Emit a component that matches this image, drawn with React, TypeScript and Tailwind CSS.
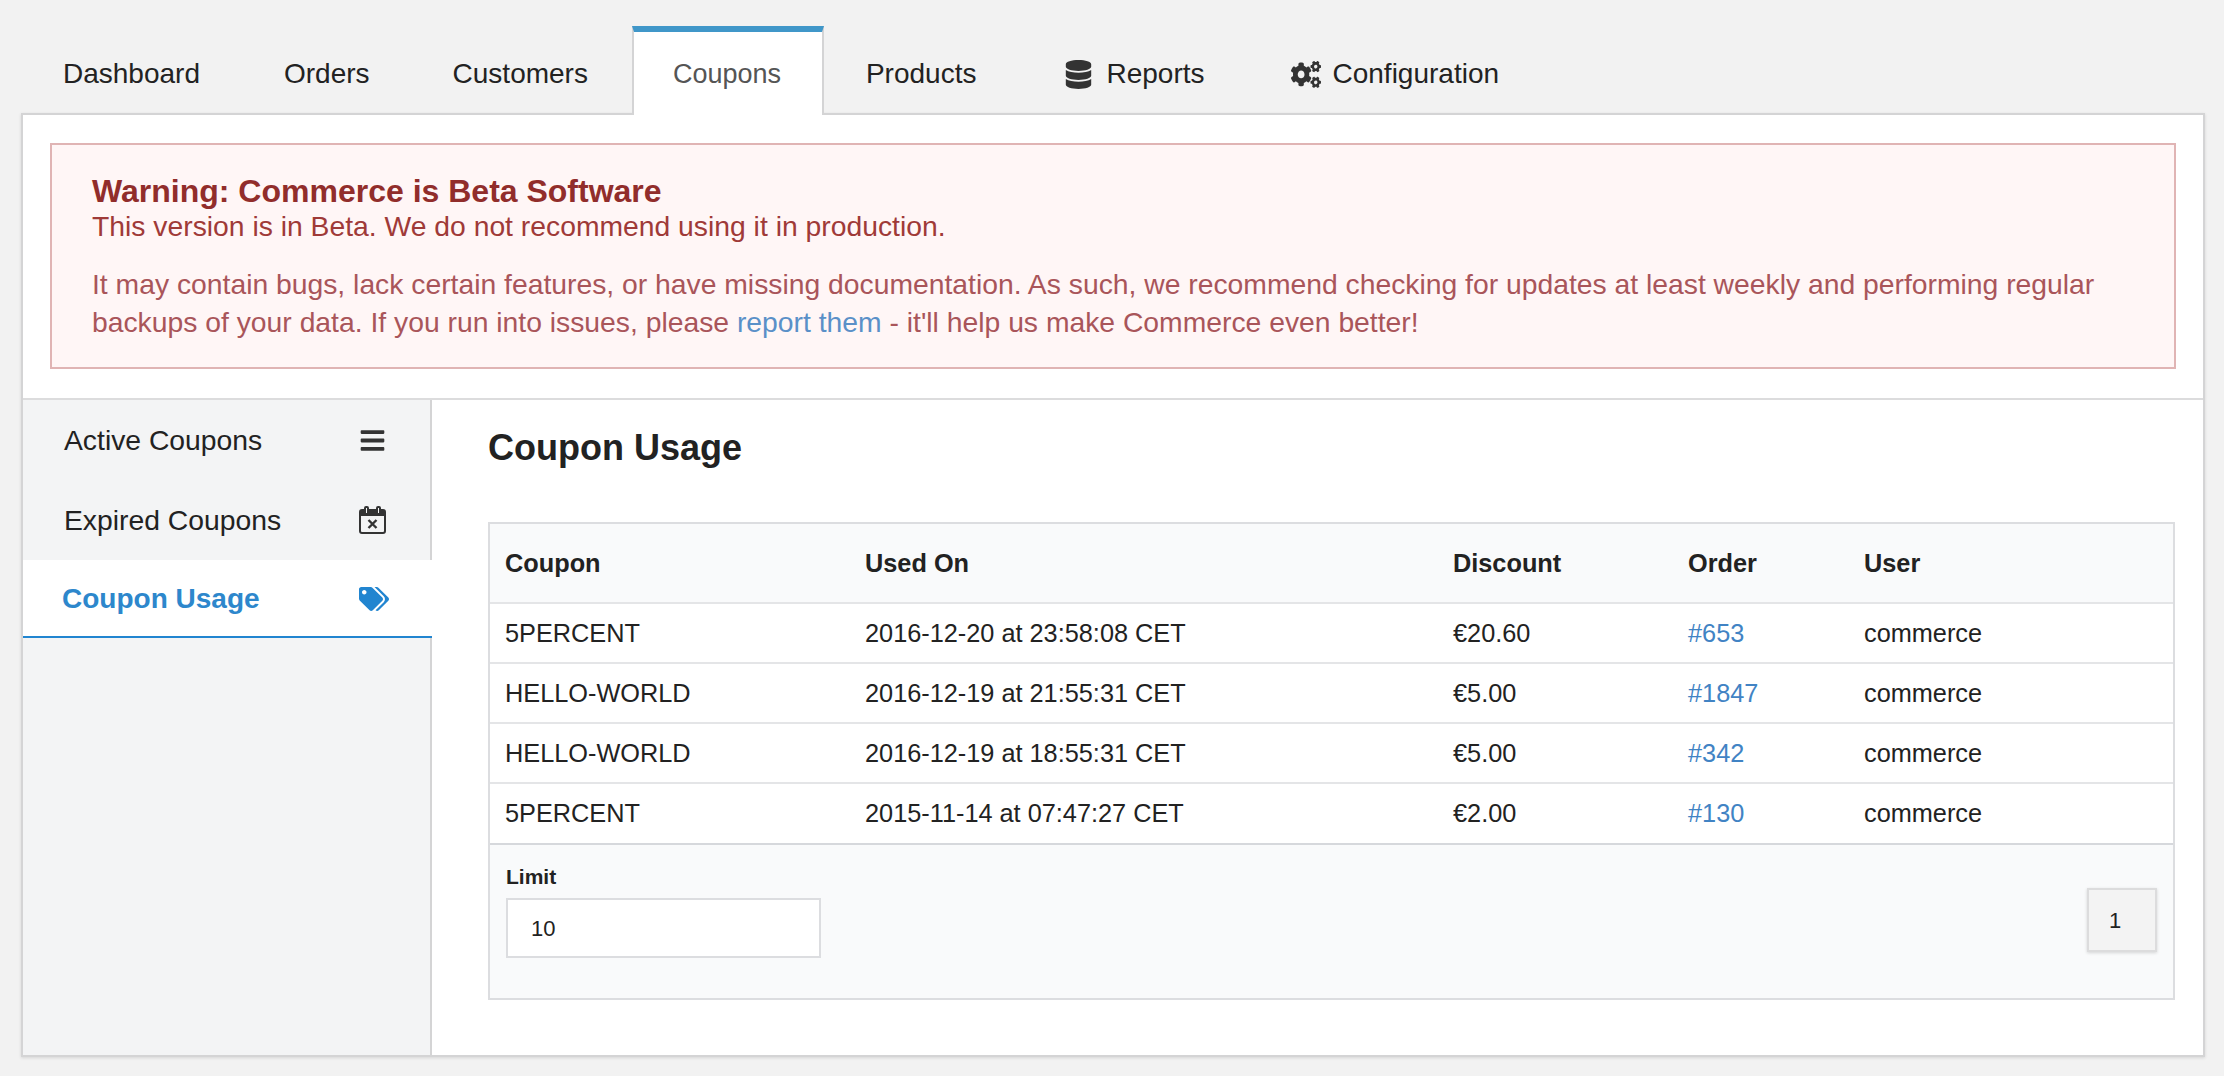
import { FaBars, FaCogs, FaDatabase, FaTags } from 'react-icons/fa';

const rows = [
  { coupon: '5PERCENT', usedOn: '2016-12-20 at 23:58:08 CET', discount: '€20.60', order: '#653' },
  { coupon: 'HELLO-WORLD', usedOn: '2016-12-19 at 21:55:31 CET', discount: '€5.00', order: '#1847' },
  { coupon: 'HELLO-WORLD', usedOn: '2016-12-19 at 18:55:31 CET', discount: '€5.00', order: '#342' },
  { coupon: '5PERCENT', usedOn: '2015-11-14 at 07:47:27 CET', discount: '€2.00', order: '#130' },
];

function Tab({ children, className = '' }: { children: React.ReactNode; className?: string }) {
  return (
    <a className={`flex items-center h-[89px] pt-[1px] border-t-[6px] border-transparent text-[28px] text-[#222] ${className}`}>
      {children}
    </a>
  );
}

// calendar with a cross, the outline style the sidebar uses
function CalendarX() {
  return (
    <svg width="27" height="28" viewBox="0 0 27 28" className="text-[#333]">
      <path
        fill="currentColor"
        fillRule="evenodd"
        d="M3 3h2V2a2 2 0 0 1 2-2h1a2 2 0 0 1 2 2v1h7V2a2 2 0 0 1 2-2h1a2 2 0 0 1 2 2v1h2a3 3 0 0 1 3 3v19a3 3 0 0 1-3 3H3a3 3 0 0 1-3-3V6a3 3 0 0 1 3-3zM7 2v5h1V2H7zm12 0v5h1V2h-1zM2 10v15a1 1 0 0 0 1 1h21a1 1 0 0 0 1-1V10H2z"
      />
      <path d="M9.5 14l8 8M17.5 14l-8 8" stroke="currentColor" strokeWidth="2.4" />
    </svg>
  );
}

export default function App() {
  return (
    <div className="min-h-[1076px] bg-[#f2f2f2] pt-[26px] pl-[21px] font-['Liberation_Sans',Arial,sans-serif]">
      <nav className="relative z-10 flex h-[89px] -mb-[2px]">
        <Tab className="pl-[42px] pr-[42px]">Dashboard</Tab>
        <Tab className="pl-[42px] pr-[41px]">Orders</Tab>
        <Tab className="pl-[42px] pr-[44px]">Customers</Tab>
        <a className="flex items-center h-[89px] w-[192px] pl-[39px] pt-[1px] border-x-2 border-x-[#d4d4d5] border-t-[6px] border-t-[#4097c9] bg-white text-[27px] text-[#555]">
          Coupons
        </a>
        <Tab className="pl-[42px] pr-[44px]">Products</Tab>
        <Tab className="pl-[44px] pr-[42px]">
          <FaDatabase className="mr-[13px] text-[29px] text-[#333]" />
          Reports
        </Tab>
        <Tab className="pl-[45px]">
          <FaCogs preserveAspectRatio="none" className="mr-[11px] w-[30px] h-[27px] text-[#333]" />
          Configuration
        </Tab>
      </nav>

      <div className="flex flex-col w-[2184px] h-[944px] bg-white border-2 border-[#d4d4d5] shadow-[0_1px_3px_rgba(0,0,0,0.12)]">
        <div className="px-[27px] pt-[28px] pb-[29px] border-b-2 border-[#dcdcdd]">
          <div className="h-[226px] pl-[40px] pr-[40px] pt-[28px] border-2 border-[#e0b4b4] bg-[#fff6f6]">
            <div className="text-[32px] leading-[36px] font-bold text-[#912d2b]">Warning: Commerce is Beta Software</div>
            <p className="text-[28.3px] leading-[35px] text-[#9f3a38]">This version is in Beta. We do not recommend using it in production.</p>
            <p className="mt-[21px] text-[28.3px] leading-[38px] text-[#a9555a]">
              It may contain bugs, lack certain features, or have missing documentation. As such, we recommend checking for updates at least weekly and performing regular backups of your data. If you run into issues, please{' '}
              <a className="text-[#5a90c8]">report them</a> - it'll help us make Commerce even better!
            </p>
          </div>
        </div>

        <div className="flex flex-1 min-h-0">
          <aside className="w-[409px] shrink-0 bg-[#f3f4f5] border-r-2 border-[#d4d4d5]">
            <a className="flex items-center justify-between h-[80px] pl-[41px] pr-[44px] text-[28.3px] text-[#222]">
              Active Coupons
              <FaBars className="text-[27px] text-[#333]" />
            </a>
            <a className="flex items-center justify-between h-[80px] pl-[41px] pr-[44px] text-[28.3px] text-[#222]">
              Expired Coupons
              <CalendarX />
            </a>
            <a className="flex items-center justify-between h-[78px] w-[409px] pl-[39px] pr-[43px] pt-[1px] bg-white border-b-2 border-[#2185d0] text-[28px] font-bold text-[#2d87cc]">
              Coupon Usage
              <FaTags className="text-[30px] text-[#2185d0]" />
            </a>
          </aside>

          <main className="flex-1 pl-[56px] pr-[28px]">
            <h1 className="mt-[28px] text-[36px] leading-[40px] font-bold text-[#222]">Coupon Usage</h1>
            <div className="mt-[54px] border-2 border-[#dcdde0] bg-[#f9fafb] text-[25.3px] text-[#222]">
              <table className="w-full table-fixed border-collapse">
                <colgroup>
                  <col className="w-[375px]" />
                  <col className="w-[588px]" />
                  <col className="w-[235px]" />
                  <col className="w-[176px]" />
                  <col />
                </colgroup>
                <thead>
                  <tr className="h-[79px]">
                    <th className="pl-[15px] pt-[2px] text-left font-bold">Coupon</th>
                    <th className="pt-[2px] text-left font-bold">Used On</th>
                    <th className="pt-[2px] text-left font-bold">Discount</th>
                    <th className="pt-[2px] text-left font-bold">Order</th>
                    <th className="pt-[2px] text-left font-bold">User</th>
                  </tr>
                </thead>
                <tbody className="bg-white">
                  {rows.map((row, i) => (
                    <tr key={i} className="h-[60px] border-t-2 border-[#e4e5e7]">
                      <td className="pl-[15px] pt-[1px]">{row.coupon}</td>
                      <td className="pt-[1px]">{row.usedOn}</td>
                      <td className="pt-[1px]">{row.discount}</td>
                      <td className="pt-[1px] text-[#4183c4]">{row.order}</td>
                      <td className="pt-[1px]">commerce</td>
                    </tr>
                  ))}
                </tbody>
              </table>
              <div className="flex items-start justify-between h-[155px] pl-[16px] pr-[16px] border-t-2 border-[#d6d8dc]">
                <div className="pt-[19px]">
                  <label className="block text-[21px] leading-[26px] font-bold text-[#222]">Limit</label>
                  <input
                    readOnly
                    value="10"
                    className="block mt-[8px] w-[315px] h-[60px] pl-[23px] pt-[2px] bg-white border-2 border-[#dcdde0] text-[22px] text-[#222]"
                  />
                </div>
                <button className="mt-[43px] w-[70px] h-[64px] pl-[20px] text-left bg-[#f3f3f3] border-2 border-[#dcdcdd] shadow-[0_1px_3px_rgba(0,0,0,0.15)] text-[22px] text-[#222]">
                  1
                </button>
              </div>
            </div>
          </main>
        </div>
      </div>
    </div>
  );
}
